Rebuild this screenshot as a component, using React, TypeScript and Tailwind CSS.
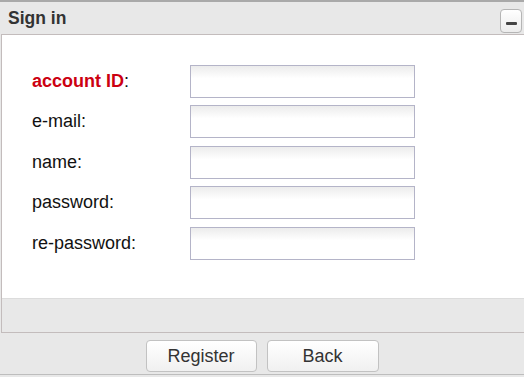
const fields = [
  { label: "account ID", required: true },
  { label: "e-mail" },
  { label: "name" },
  { label: "password" },
  { label: "re-password" },
];

export default function App() {
  return (
    <div
      className="w-[524px] h-[377px] bg-[#e8e8e8] border-t-2 border-[#a9a9a9] flex flex-col overflow-hidden"
      style={{ fontFamily: '"Liberation Sans", Arial, sans-serif' }}
    >
      {/* header */}
      <div className="h-[32px] flex items-center justify-between pl-[8px] pr-[2px]">
        <span className="text-[17.5px] font-bold text-[#333]">Sign in</span>
        <button className="w-[22px] h-[24px] mt-[5px] rounded-[4px] border border-[#b5b5b5] bg-gradient-to-b from-white to-[#ececec] flex items-end justify-center pb-[7px]">
          <span className="block w-[11px] h-[3px] bg-[#444] rounded-[1px]" />
        </button>
      </div>

      {/* content */}
      <div className="ml-[1px] border-t border-l border-b border-[#c3bcbc] flex flex-col">
        <div className="bg-white h-[263px] pt-[30px] flex flex-col gap-[8px]">
          {fields.map((f) => (
            <div key={f.label} className="flex items-center h-[32.5px]">
              <label className="w-[188px] shrink-0 pl-[30px] text-[18px] text-[#111]">
                {f.required ? (
                  <span className="text-[#cc0011] font-bold">{f.label}</span>
                ) : (
                  f.label
                )}
                :
              </label>
              <input
                className="w-[225px] shrink-0 h-[33px] border border-[#b4b4c8] bg-gradient-to-b from-[#ececec] via-white via-40% to-white outline-none"
                type={f.label.includes("password") ? "password" : "text"}
              />
            </div>
          ))}
        </div>
        <div className="h-[34px] border-t border-[#dcdcdc] bg-[#e8e8e8]" />
      </div>

      {/* footer */}
      <div className="h-[42px] border-b border-[#bdbdbd] flex justify-center gap-[10px] pt-[7px]">
        <button className="w-[111px] h-[32px] rounded-[4px] border border-[#c2c2c2] bg-gradient-to-b from-white to-[#f0f0f0] text-[18px] text-[#333]">
          Register
        </button>
        <button className="w-[112px] h-[32px] rounded-[4px] border border-[#c2c2c2] bg-gradient-to-b from-white to-[#f0f0f0] text-[18px] text-[#333]">
          Back
        </button>
      </div>
    </div>
  );
}
